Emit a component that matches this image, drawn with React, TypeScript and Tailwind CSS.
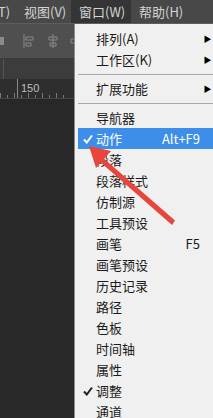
import React from 'react'

type Item =
  | { type: 'sep' }
  | { type: 'item'; label: string; shortcut?: string; sub?: boolean; checked?: boolean; active?: boolean }

const items: Item[] = [
  { type: 'item', label: '排列(A)', sub: true },
  { type: 'item', label: '工作区(K)', sub: true },
  { type: 'sep' },
  { type: 'item', label: '扩展功能', sub: true },
  { type: 'sep' },
  { type: 'item', label: '导航器' },
  { type: 'item', label: '动作', shortcut: 'Alt+F9', checked: true, active: true },
  { type: 'item', label: '段落' },
  { type: 'item', label: '段落样式' },
  { type: 'item', label: '仿制源' },
  { type: 'item', label: '工具预设' },
  { type: 'item', label: '画笔', shortcut: 'F5' },
  { type: 'item', label: '画笔预设' },
  { type: 'item', label: '历史记录' },
  { type: 'item', label: '路径' },
  { type: 'item', label: '色板' },
  { type: 'item', label: '时间轴' },
  { type: 'item', label: '属性' },
  { type: 'item', label: '调整', checked: true },
  { type: 'item', label: '通道' },
]

function Check({ color }: { color: string }) {
  return (
    <svg width="10" height="10" viewBox="0 0 10 10">
      <path d="M1 5.5 L3.8 8.5 L9 1.5" fill="none" stroke={color} strokeWidth="2" />
    </svg>
  )
}

function MenuRow({ item }: { item: Item }) {
  if (item.type === 'sep') {
    return (
      <div className="h-[8px] flex items-center pl-[3px]">
        <div className="h-px w-full bg-[#a8a8a8]" />
      </div>
    )
  }
  return (
    <div
      className={`h-[21px] ml-[3px] grid grid-cols-[18px_1fr_auto_19px] items-center ${
        item.active ? 'bg-[#3d8ee8] text-white' : 'text-[#1b1b1b]'
      }`}
    >
      <div className="flex justify-center pl-[2px]">
        {item.checked && <Check color={item.active ? '#ffffff' : '#222222'} />}
      </div>
      <span>{item.label}</span>
      <span>{item.shortcut ?? ''}</span>
      <div className="flex justify-center pr-[4px]">
        {item.sub && <span className="text-[8px] leading-none text-black">▶</span>}
      </div>
    </div>
  )
}

export default function App() {
  return (
    <div className="relative w-[213px] h-[418px] overflow-hidden bg-[#282828] font-['Noto_Sans_CJK_SC',sans-serif] text-[13px]">
      {/* menu bar */}
      <div className="h-[24px] bg-[#484848] flex items-center text-[#d4d4d4] border-b border-[#5e5e5e]">
        <span className="ml-[-2px] w-[26px]">T)</span>
        <span className="w-[47px]">视图(V)</span>
        <span className="h-full w-[60px] bg-[#353535] flex items-center pl-[8px]">窗口(W)</span>
        <span className="pl-[8px]">帮助(H)</span>
      </div>

      {/* options bar */}
      <div className="h-[35px] bg-[#4f4f4f] flex items-center text-[#8a8a8a] border-b border-[#3a3a3a]">
        <div className="w-[4px] h-[8px] bg-[#8a8a8a]" />
        <svg width="12" height="14" viewBox="0 0 12 14" className="ml-[19px]">
          <path d="M1 0 V14 M3 3 H10 V6 H3 Z M3 9 H8 V12 H3 Z" fill="none" stroke="#8a8a8a" strokeWidth="1" />
        </svg>
        <svg width="12" height="14" viewBox="0 0 12 14" className="ml-[12px]">
          <path d="M6 0 V14 M2 3 H10 V6 H2 Z M3 9 H9 V12 H3 Z" fill="none" stroke="#8a8a8a" strokeWidth="1" />
        </svg>
        <svg width="6" height="14" viewBox="0 0 6 14" className="ml-[11px]">
          <path d="M1 5 H6 V9 H1 Z" fill="none" stroke="#8a8a8a" strokeWidth="1" />
        </svg>
      </div>

      {/* tab strip */}
      <div className="h-[20px] bg-[#3c3c3c] flex">
        <div className="w-[4px] border-r border-[#555555]" />
      </div>

      {/* ruler */}
      <div className="h-[20px] bg-[#2e2e2e] border-b border-[#444444] relative flex items-end">
        <div className="flex items-end h-full">
          {Array.from({ length: 10 }).map((_, i) => (
            <div key={i} className={`w-[7px] border-l border-[#777777] ${i % 2 === 1 ? 'h-[3px]' : 'h-[5px]'}`} />
          ))}
        </div>
        <div className="absolute left-[17px] top-0 h-full border-l border-[#888888]" />
        <span className="absolute left-[21px] top-[1px] text-[11px] text-[#bdbdbd] font-['Liberation_Sans',sans-serif]">150</span>
      </div>

      {/* dropdown */}
      <div className="absolute left-[74px] top-[24px] w-[145px] h-[400px] bg-[#f0f0f0] border-l border-[#8c8c8c] pt-[4px]">
        {items.map((it, i) => (
          <MenuRow key={i} item={it} />
        ))}
      </div>

      {/* red arrow */}
      <svg className="absolute left-0 top-0" width="213" height="418" viewBox="0 0 213 418">
        <path d="M89 146 L111 151 L96 168 Z" fill="#e8463c" />
        <path d="M101 156 L175 220.5 L172 225 L99 161 Z" fill="#e8463c" />
      </svg>
    </div>
  )
}
